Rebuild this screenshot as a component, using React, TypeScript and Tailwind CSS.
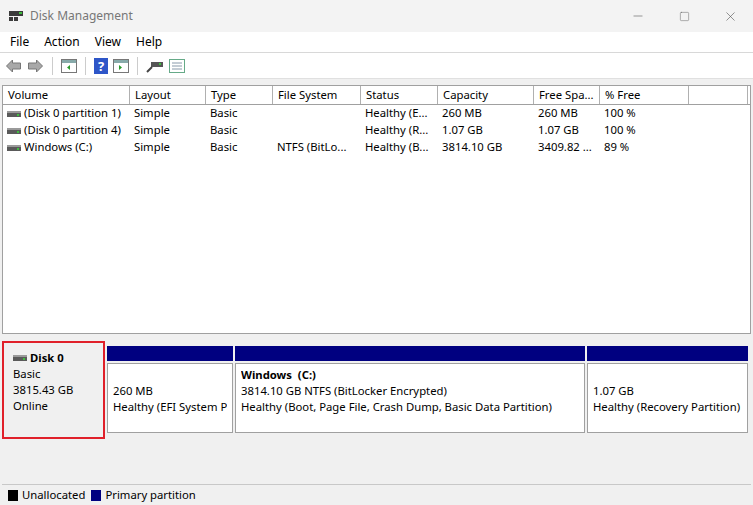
import { Minus, Square, X } from 'lucide-react'

const cols = [
  { label: 'Volume', w: 127 },
  { label: 'Layout', w: 76 },
  { label: 'Type', w: 67 },
  { label: 'File System', w: 88 },
  { label: 'Status', w: 77 },
  { label: 'Capacity', w: 96 },
  { label: 'Free Spa...', w: 66 },
  { label: '% Free', w: 89 },
  { label: '', w: 59 },
]

const rows = [
  ['(Disk 0 partition 1)', 'Simple', 'Basic', '', 'Healthy (E...', '260 MB', '260 MB', '100 %'],
  ['(Disk 0 partition 4)', 'Simple', 'Basic', '', 'Healthy (R...', '1.07 GB', '1.07 GB', '100 %'],
  ['Windows (C:)', 'Simple', 'Basic', 'NTFS (BitLo...', 'Healthy (B...', '3814.10 GB', '3409.82 ...', '89 %'],
]

function DriveIcon() {
  return (
    <svg width="14" height="8" viewBox="0 0 14 8" className="shrink-0">
      <rect x="0" y="1" width="14" height="6" fill="#5a5a5a" />
      <rect x="0" y="1" width="14" height="2" fill="#9a9a9a" />
      <rect x="10" y="4" width="2" height="2" fill="#3fbf3f" />
    </svg>
  )
}

function Partition({ width, children }: { width: string; children: React.ReactNode }) {
  return (
    <div className={`${width} flex flex-col`}>
      <div className="h-[15px] bg-[#000080]" />
      <div className="mt-[2px] h-[70px] border border-[#a0a0a0] bg-white px-[5px] py-[2px] leading-[16px]">
        <div className="overflow-hidden whitespace-nowrap">{children}</div>
      </div>
    </div>
  )
}

export default function App() {
  return (
    <div className="w-[753px] h-[505px] bg-[#f0f0f0] text-[11.3px] text-black flex flex-col overflow-hidden" style={{ fontFamily: '"Segoe UI", "Noto Sans", sans-serif' }}>
      {/* Title bar */}
      <div className="h-[32px] bg-[#f3f3f3] flex items-center pl-[8px]">
        <svg width="16" height="14" viewBox="0 0 16 14">
          <rect x="1" y="2" width="14" height="5" fill="#3a3a3a" />
          <rect x="11" y="3" width="3" height="2" fill="#3fbf3f" />
          <rect x="1" y="8" width="4" height="4" fill="#3a3a3a" />
          <rect x="6" y="8" width="4" height="4" fill="#3a3a3a" />
        </svg>
        <span className="ml-[6px] text-[#777] text-[12px]">Disk Management</span>
        <div className="ml-auto flex items-center text-[#555]">
          <div className="w-[46px] flex justify-center"><Minus size={14} strokeWidth={1} /></div>
          <div className="w-[46px] flex justify-center"><Square size={11} strokeWidth={1} /></div>
          <div className="w-[46px] flex justify-center"><X size={15} strokeWidth={1} /></div>
        </div>
      </div>
      {/* Menu */}
      <div className="h-[21px] bg-white flex items-center border-b border-[#d8d8d8] text-[12px]">
        <span className="ml-[10px]">File</span>
        <span className="ml-[15px]">Action</span>
        <span className="ml-[15px]">View</span>
        <span className="ml-[15px]">Help</span>
      </div>
      {/* Toolbar */}
      <div className="h-[26px] bg-white flex items-center pl-[5px] gap-[5px] border-b border-[#e0e0e0]">
        <svg width="17" height="14" viewBox="0 0 16 14"><path d="M1 7 L7 1 V4 H15 V10 H7 V13 Z" fill="#a8a8a8" stroke="#777" /></svg>
        <svg width="17" height="14" viewBox="0 0 16 14"><path d="M15 7 L9 1 V4 H1 V10 H9 V13 Z" fill="#a8a8a8" stroke="#777" /></svg>
        <div className="w-px h-[18px] bg-[#ccc] mx-[3px]" />
        <svg width="16" height="14" viewBox="0 0 16 14"><rect x="0.5" y="0.5" width="15" height="13" fill="#fff" stroke="#777" /><rect x="1" y="1" width="14" height="3" fill="#8aa" /><path d="M9 6 L6 8.5 L9 11Z" fill="#2a9a2a" /></svg>
        <div className="w-px h-[18px] bg-[#ccc] mx-[3px]" />
        <svg width="14" height="16" viewBox="0 0 14 16"><rect width="14" height="16" fill="#2e56c8" /><text x="7" y="13" fontSize="13" fill="#fff" textAnchor="middle" fontWeight="bold">?</text></svg>
        <svg width="16" height="14" viewBox="0 0 16 14"><rect x="0.5" y="0.5" width="15" height="13" fill="#fff" stroke="#777" /><rect x="1" y="1" width="14" height="3" fill="#8aa" /><path d="M6 6 L9 8.5 L6 11Z" fill="#2a9a2a" /></svg>
        <div className="w-px h-[18px] bg-[#ccc] mx-[3px]" />
        <svg width="18" height="14" viewBox="0 0 18 14"><rect x="5" y="3" width="12" height="5" fill="#555" /><rect x="13" y="4" width="2" height="2" fill="#3fbf3f" /><path d="M6 8 L1 13" stroke="#444" strokeWidth="2" /></svg>
        <svg width="16" height="14" viewBox="0 0 16 14"><rect x="0.5" y="0.5" width="15" height="13" fill="#fff" stroke="#6a8" /><path d="M3 4 H13 M3 7 H13 M3 10 H13" stroke="#89a" /></svg>
      </div>
      {/* Volume list */}
      <div className="mt-[6px] mx-[2px] h-[249px] bg-white border border-[#a0a0a0] flex flex-col">
        <div className="flex h-[19px] border-b border-[#a0a0a0] bg-white">
          {cols.map((c, i) => (
            <div key={i} style={{ width: c.w }} className="border-r border-[#b0b0b0] pl-[5px] flex items-center shrink-0">{c.label}</div>
          ))}
        </div>
        {rows.map((r, i) => (
          <div key={i} className="flex h-[17px] items-center">
            {r.map((cell, j) => (
              <div key={j} style={{ width: cols[j].w }} className="pl-[4px] shrink-0 whitespace-nowrap overflow-hidden flex items-center gap-[3px]">
                {j === 0 && <DriveIcon />}
                {cell}
              </div>
            ))}
          </div>
        ))}
      </div>
      {/* Disk graphical view */}
      <div className="mt-[7px] mx-[2px] flex-1 flex flex-col">
        <div className="flex h-[98px] gap-[2px]">
          <div className="w-[103px] border-[2px] border-[#e0202a] bg-[#f0f0f0] px-[9px] pt-[7px] leading-[16px]">
            <div className="flex items-center gap-[3px] font-bold"><DriveIcon />Disk 0</div>
            <div>Basic</div>
            <div>3815.43 GB</div>
            <div>Online</div>
          </div>
          <div className="flex-1 flex gap-[2px] pt-[5px]">
            <Partition width="w-[126px]">
              <div className="mt-[17px]">260 MB</div>
              <div>Healthy (EFI System Partition)</div>
            </Partition>
            <Partition width="w-[350px]">
              <div className="font-bold mt-[1px]">Windows&nbsp;&nbsp;(C:)</div>
              <div>3814.10 GB NTFS (BitLocker Encrypted)</div>
              <div>Healthy (Boot, Page File, Crash Dump, Basic Data Partition)</div>
            </Partition>
            <Partition width="w-[161px]">
              <div className="mt-[17px]">1.07 GB</div>
              <div>Healthy (Recovery Partition)</div>
            </Partition>
          </div>
        </div>
        <div className="flex-1 border-b border-[#c8c8c8]" />
        <div className="h-[20px] flex items-center pl-[6px] gap-[4px]">
          <div className="w-[10px] h-[11px] bg-black" />
          <span>Unallocated</span>
          <div className="w-[10px] h-[11px] bg-[#000080] ml-[2px]" />
          <span>Primary partition</span>
        </div>
      </div>
    </div>
  )
}
